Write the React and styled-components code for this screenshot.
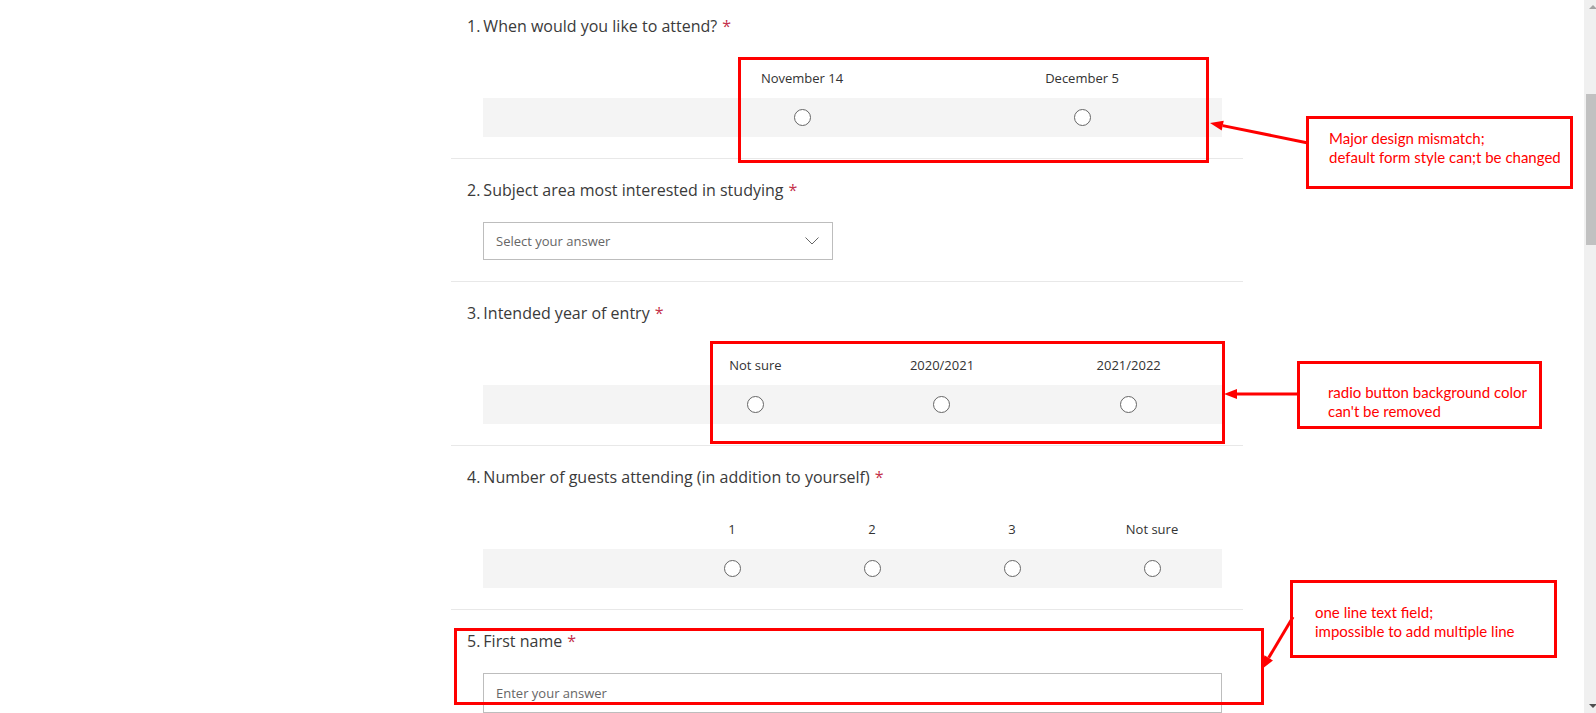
import React from 'react';
import styled, { createGlobalStyle } from 'styled-components';

const GlobalStyle = createGlobalStyle`
  html, body {
    margin: 0;
    padding: 0;
    background: #fff;
    overflow: hidden;
  }
`;

const Page = styled.div`
  display: flex;
  width: 100%;
  height: 713px;
  overflow: hidden;
`;

const Main = styled.main`
  position: relative;
  flex: 1;
  overflow: hidden;
  font-family: 'Open Sans', 'Noto Sans', sans-serif;
  color: #333;
`;

const FormColumn = styled.div`
  width: 792px;
  margin-left: 451px;
`;

const Section = styled.section`
  border-top: ${p => (p.first ? 'none' : '1px solid #e8e8e8')};
  padding: ${p => (p.first ? '16px' : '21px')} 21px 21px 0;
`;

const Title = styled.div`
  padding-left: 16px;
  height: 20px;
  line-height: 20px;
  font-size: 16px;
  color: #3a3a3a;
  margin-bottom: 22px;
  white-space: nowrap;
`;

const Num = styled.span`
  margin-right: 3px;
`;

const Required = styled.span`
  color: #c4314b;
  margin-left: 5px;
`;

const Content = styled.div`
  padding-left: 32px;
`;

const Matrix = styled.div`
  display: grid;
  grid-template-columns: 179px repeat(${p => p.cols}, 1fr);
`;

const HeadCell = styled.div`
  height: 40px;
  display: flex;
  align-items: center;
  justify-content: center;
  font-size: 13px;
  color: #333;
`;

const BodyCell = styled.div`
  height: 39px;
  background: #f4f4f4;
  display: flex;
  align-items: center;
  justify-content: center;
`;

const Radio = styled.span`
  box-sizing: border-box;
  width: 17px;
  height: 17px;
  border-radius: 50%;
  border: 1px solid #666;
  background: #fff;
`;

const Select = styled.div`
  box-sizing: border-box;
  width: 350px;
  height: 38px;
  border: 1px solid #bdbdbd;
  display: flex;
  align-items: center;
  justify-content: space-between;
  padding: 0 13px 0 12px;
  font-size: 13px;
  color: #666;
`;

const TextInput = styled.div`
  box-sizing: border-box;
  width: 739px;
  height: 40px;
  border: 1px solid #bdbdbd;
  display: flex;
  align-items: center;
  padding: 0 12px;
  font-size: 13px;
  color: #666;
`;

const Scrollbar = styled.div`
  width: 12px;
  height: 100%;
  background: #f0f0f0;
  display: flex;
  flex-direction: column;
`;

const ScrollButton = styled.div`
  height: 17px;
  display: flex;
  align-items: ${p => (p.down ? 'flex-end' : 'flex-start')};
  padding: ${p => (p.down ? '0 0 5px 5px' : '5px 0 0 5px')};
  box-sizing: border-box;
`;

const Triangle = styled.span`
  width: 0;
  height: 0;
  border-left: 4px solid transparent;
  border-right: 4px solid transparent;
  ${p => (p.down ? 'border-top: 4px solid #505050;' : 'border-bottom: 4px solid #a3a3a3;')}
`;

const Track = styled.div`
  flex: 1;
`;

const Thumb = styled.div`
  margin: 77px 0 0 2px;
  width: 10px;
  height: 151px;
  background: #c1c1c1;
`;

/* red review marks drawn over the form */
const Overlay = styled.div`
  position: absolute;
  inset: 0;
  pointer-events: none;
`;

const MarkBox = styled.div`
  position: absolute;
  box-sizing: border-box;
  left: ${p => p.x}px;
  top: ${p => p.y}px;
  width: ${p => p.w}px;
  height: ${p => p.h}px;
  border: 3px solid #ff0000;
`;

const Note = styled(MarkBox)`
  background: #fff;
  padding: ${p => p.pt}px 0 0 ${p => p.pl}px;
  font-family: 'Lato', 'Open Sans', sans-serif;
  font-size: 15px;
  line-height: 19px;
  color: #ff0000;
  white-space: nowrap;
`;

const ArrowLayer = styled.svg`
  position: absolute;
  left: 0;
  top: 0;
`;

function Arrow({ x1, y1, x2, y2 }) {
  const dx = x2 - x1;
  const dy = y2 - y1;
  const len = Math.hypot(dx, dy);
  const ux = dx / len;
  const uy = dy / len;
  const bx = x2 - ux * 13;
  const by = y2 - uy * 13;
  const pts = [
    `${x2},${y2}`,
    `${bx - uy * 5},${by + ux * 5}`,
    `${bx + uy * 5},${by - ux * 5}`,
  ].join(' ');
  return (
    <g>
      <line x1={x1} y1={y1} x2={bx} y2={by} stroke="#ff0000" strokeWidth="3" />
      <polygon points={pts} fill="#ff0000" />
    </g>
  );
}

const Chevron = () => (
  <svg width="14" height="8" viewBox="0 0 14 8">
    <path d="M0.5 0.5 L7 7 L13.5 0.5" fill="none" stroke="#666" strokeWidth="1" />
  </svg>
);

const questions = [
  { kind: 'matrix', title: 'When would you like to attend?', options: ['November 14', 'December 5'] },
  { kind: 'select', title: 'Subject area most interested in studying' },
  { kind: 'matrix', title: 'Intended year of entry', options: ['Not sure', '2020/2021', '2021/2022'] },
  { kind: 'matrix', title: 'Number of guests attending (in addition to yourself)', options: ['1', '2', '3', 'Not sure'] },
  { kind: 'text', title: 'First name' },
];

function Question({ q, index }) {
  return (
    <Section first={index === 0}>
      <Title>
        <Num>{index + 1}.</Num>
        {q.title}
        <Required>*</Required>
      </Title>
      <Content>
        {q.kind === 'matrix' && (
          <Matrix cols={q.options.length}>
            <HeadCell />
            {q.options.map(o => (
              <HeadCell key={o}>{o}</HeadCell>
            ))}
            <BodyCell />
            {q.options.map(o => (
              <BodyCell key={o}>
                <Radio />
              </BodyCell>
            ))}
          </Matrix>
        )}
        {q.kind === 'select' && (
          <Select>
            Select your answer
            <Chevron />
          </Select>
        )}
        {q.kind === 'text' && <TextInput>Enter your answer</TextInput>}
      </Content>
    </Section>
  );
}

export default function App() {
  return (
    <>
      <GlobalStyle />
      <Page>
        <Main>
          <FormColumn>
            {questions.map((q, i) => (
              <Question key={q.title} q={q} index={i} />
            ))}
          </FormColumn>
          <Overlay>
            <MarkBox x={738} y={57} w={471} h={106} />
            <MarkBox x={710} y={341} w={515} h={103} />
            <MarkBox x={454} y={628} w={810} h={77} />
            <Note x={1306} y={116} w={267} h={73} pt={10} pl={20}>
              Major design mismatch;
              <br />
              default form style can;t be changed
            </Note>
            <Note x={1297} y={361} w={245} h={68} pt={19} pl={28}>
              radio button background color
              <br />
              can't be removed
            </Note>
            <Note x={1290} y={580} w={267} h={78} pt={20} pl={22}>
              one line text field;
              <br />
              impossible to add multiple line
            </Note>
            <ArrowLayer width="1584" height="713">
              <Arrow x1={1308} y1={143} x2={1210} y2={123} />
              <Arrow x1={1297} y1={394} x2={1224} y2={394} />
              <Arrow x1={1293} y1={617} x2={1262} y2={669} />
            </ArrowLayer>
          </Overlay>
        </Main>
        <Scrollbar>
          <ScrollButton>
            <Triangle />
          </ScrollButton>
          <Track>
            <Thumb />
          </Track>
          <ScrollButton down>
            <Triangle down />
          </ScrollButton>
        </Scrollbar>
      </Page>
    </>
  );
}
